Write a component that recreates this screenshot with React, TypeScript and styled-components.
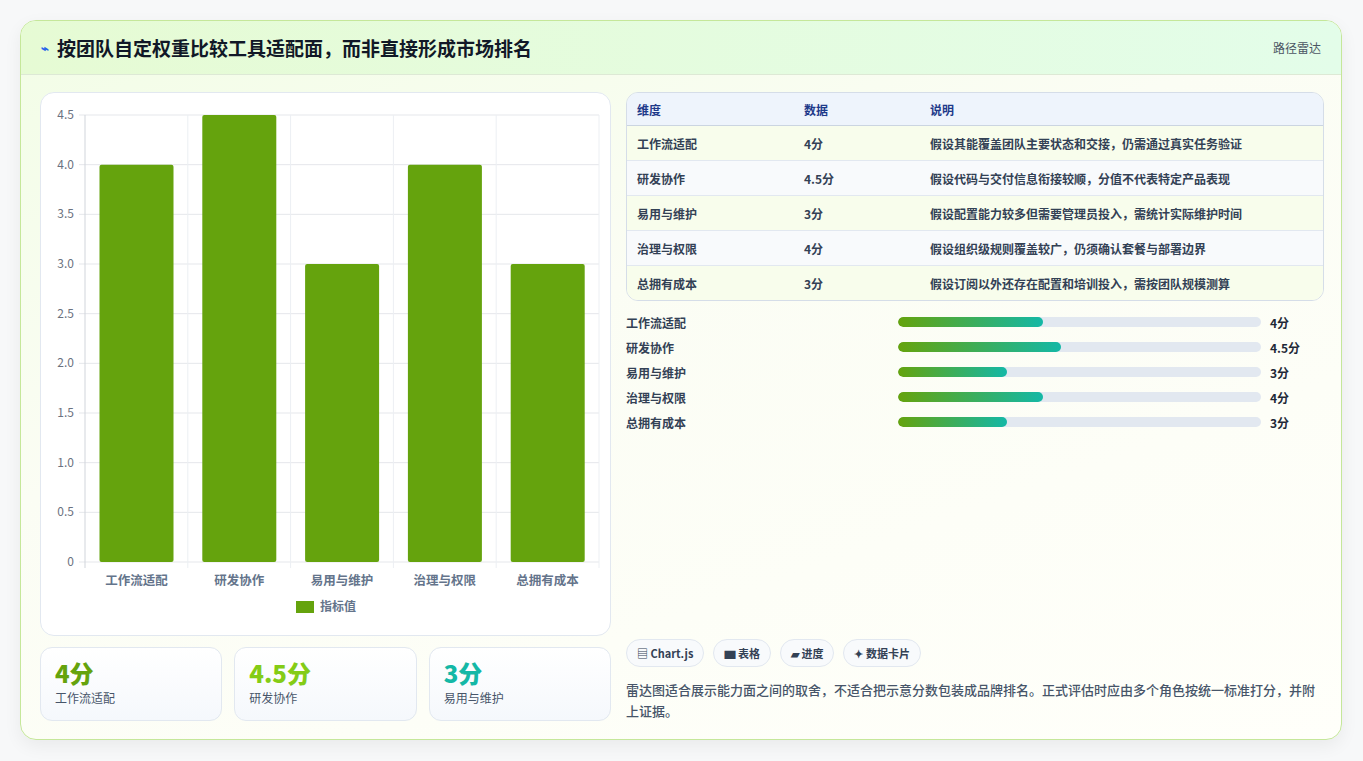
import React from "react";
import styled, { createGlobalStyle } from "styled-components";

const Global = createGlobalStyle`
  html, body { margin: 0; padding: 0; background: #f7f8f9; }
  body { font-family: "Noto Sans CJK SC", "Noto Sans", sans-serif; color: #1f2937; }
`;

const Page = styled.div`
  width: 1363px; height: 761px; box-sizing: border-box; padding: 20px 21px 21px 20px;
`;
const Card = styled.div`
  height: 100%; box-sizing: border-box; border: 1px solid #c5e79a; border-radius: 16px;
  background: linear-gradient(160deg, #f2fde6 0%, #fbfdf4 40%, #fffffa 100%);
  box-shadow: 0 6px 18px rgba(0,0,0,0.06); overflow: hidden; display: flex; flex-direction: column;
`;
const Header = styled.div`
  height: 55px; box-sizing: border-box; display: flex; align-items: center; justify-content: space-between;
  padding: 0 20px; background: linear-gradient(90deg, #e6fbd4, #e3fde9); border-bottom: 1px solid #dde9d5;
`;
const Title = styled.h1`
  margin: 0; font-size: 19px; font-weight: 700; color: #111827; display: flex; align-items: center; gap: 8px;
`;
const Tag = styled.span` font-size: 12px; color: #4b5563; `;
const Body = styled.div`
  flex: 1; display: grid; grid-template-columns: 571px 698px; gap: 15px; padding: 17px 19px 18px 19px;
`;
const Col = styled.div` display: flex; flex-direction: column; min-height: 0; `;
const ChartBox = styled.div`
  height: 544px; box-sizing: border-box; background: #fff; border: 1px solid #e2e8f0; border-radius: 14px;
`;
const Stats = styled.div` display: grid; grid-template-columns: repeat(3, 1fr); gap: 12px; margin-top: 11px; `;
const Stat = styled.div`
  height: 74px; box-sizing: border-box; border: 1px solid #e2e8f0; border-radius: 12px;
  background: linear-gradient(180deg, #ffffff, #f5f8fc); padding: 10px 14px;
`;
const StatVal = styled.div<{ c: string }>` font-size: 24px; font-weight: 800; color: ${p => p.c}; line-height: 30px; `;
const StatLbl = styled.div` font-size: 12px; color: #475569; margin-top: 1px; `;

const Table = styled.table`
  width: 100%; border-collapse: separate; border-spacing: 0; font-size: 12px;
  border: 1px solid #d5dde8; border-radius: 12px; overflow: hidden;
`;
const Th = styled.th`
  text-align: left; font-weight: 700; color: #1e3a8a; background: #eef4fc; height: 32px; padding: 0 10px;
  border-bottom: 1px solid #cbd5e1;
`;
const Td = styled.td<{ alt?: boolean }>`
  height: 34px; padding: 0 10px; font-weight: 600; color: #334155; background: ${p => p.alt ? "#f8fafc" : "#f8fdec"};
  border-bottom: 1px solid #e2e8f0;
  tr:last-child > & { border-bottom: none; }
`;
const Bars = styled.div` display: flex; flex-direction: column; gap: 7px; margin-top: 12px; `;
const BarRow = styled.div` display: grid; grid-template-columns: 263px 363px 1fr; align-items: center; gap: 9px; height: 18px; font-size: 12px; font-weight: 600; color: #334155; `;
const Track = styled.div` height: 10px; border-radius: 5px; background: #e2e8f0; overflow: hidden; `;
const Fill = styled.div` height: 100%; border-radius: 5px; background: linear-gradient(90deg, #65a30d, #14b8a6); `;
const BarVal = styled.span` font-weight: 700; color: #1f2937; `;
const Spacer = styled.div` flex: 1; `;
const Chips = styled.div` display: flex; gap: 9px; `;
const Chip = styled.span`
  height: 28px; box-sizing: border-box; padding: 0 10px; border: 1px solid #e2e8f0; border-radius: 14px; background: #f8fafc;
  display: inline-flex; align-items: center; gap: 3px; font-size: 11px; font-weight: 700; color: #334155;
`;
const Note = styled.p` margin: 12px 0 0; font-size: 13px; line-height: 21px; color: #475569; font-weight: 500; `;

const rows = [
  ["工作流适配", 4, "假设其能覆盖团队主要状态和交接，仍需通过真实任务验证"],
  ["研发协作", 4.5, "假设代码与交付信息衔接较顺，分值不代表特定产品表现"],
  ["易用与维护", 3, "假设配置能力较多但需要管理员投入，需统计实际维护时间"],
  ["治理与权限", 4, "假设组织级规则覆盖较广，仍须确认套餐与部署边界"],
  ["总拥有成本", 3, "假设订阅以外还存在配置和培训投入，需按团队规模测算"],
] as const;

function Chart() {
  const x0 = 44, x1 = 558, yTop = 22, yBot = 469;
  const ticks = [0, 0.5, 1, 1.5, 2, 2.5, 3, 3.5, 4, 4.5];
  const y = (v: number) => yBot - (v / 4.5) * (yBot - yTop);
  const w = (x1 - x0) / 5;
  return (
    <svg width="569" height="542" style={{ display: "block" }} fontFamily="'Noto Sans CJK SC', sans-serif">
      {ticks.map(t => (
        <g key={t}>
          <line x1={x0 - 6} x2={x1} y1={y(t)} y2={y(t)} stroke="#e5e7eb" />
          <text x={x0 - 11} y={y(t) + 4} textAnchor="end" fontSize="12" fill="#6b7280">{t === 0 ? "0" : t.toFixed(1)}</text>
        </g>
      ))}
      {[0, 1, 2, 3, 4, 5].map(i => (
        <line key={i} x1={x0 + i * w} x2={x0 + i * w} y1={yTop} y2={yBot + 6} stroke={i === 0 ? "#d1d5db" : "#eceff3"} />
      ))}
      {rows.map((r, i) => (
        <g key={r[0]}>
          <rect x={x0 + i * w + 14.5} y={y(r[1])} width={74} height={yBot - y(r[1])} fill="#65a30d" rx="2" />
          <text x={x0 + i * w + w / 2} y={yBot + 23} textAnchor="middle" fontSize="12.5" fontWeight="600" fill="#64748b">{r[0]}</text>
        </g>
      ))}
      <rect x="255" y="508" width="18" height="12" fill="#65a30d" />
      <text x="279" y="518" fontSize="12" fontWeight="600" fill="#64748b">指标值</text>
    </svg>
  );
}

export default function App() {
  return (
    <Page>
      <Global />
      <Card>
        <Header>
          <Title><span style={{ color: "#2563eb", fontSize: 13 }}>⌁</span>按团队自定权重比较工具适配面，而非直接形成市场排名</Title>
          <Tag>路径雷达</Tag>
        </Header>
        <Body>
          <Col>
            <ChartBox><Chart /></ChartBox>
            <Stats>
              <Stat><StatVal c="#65a30d">4分</StatVal><StatLbl>工作流适配</StatLbl></Stat>
              <Stat><StatVal c="#84cc16">4.5分</StatVal><StatLbl>研发协作</StatLbl></Stat>
              <Stat><StatVal c="#14b8a6">3分</StatVal><StatLbl>易用与维护</StatLbl></Stat>
            </Stats>
          </Col>
          <Col>
            <Table>
              <thead><tr><Th style={{ width: 147 }}>维度</Th><Th style={{ width: 106 }}>数据</Th><Th>说明</Th></tr></thead>
              <tbody>
                {rows.map((r, i) => (
                  <tr key={r[0]}><Td alt={i % 2 === 1}>{r[0]}</Td><Td alt={i % 2 === 1}>{r[1]}分</Td><Td alt={i % 2 === 1}>{r[2]}</Td></tr>
                ))}
              </tbody>
            </Table>
            <Bars>
              {rows.map(r => (
                <BarRow key={r[0]}>
                  <span>{r[0]}</span>
                  <Track><Fill style={{ width: `${r[1] * 10}%` }} /></Track>
                  <BarVal>{r[1]}分</BarVal>
                </BarRow>
              ))}
            </Bars>
            <Spacer />
            <Chips>
              <Chip>▤ Chart.js</Chip><Chip>▆ 表格</Chip><Chip>▰ 进度</Chip><Chip>✦ 数据卡片</Chip>
            </Chips>
            <Note>雷达图适合展示能力面之间的取舍，不适合把示意分数包装成品牌排名。正式评估时应由多个角色按统一标准打分，并附上证据。</Note>
          </Col>
        </Body>
      </Card>
    </Page>
  );
}
